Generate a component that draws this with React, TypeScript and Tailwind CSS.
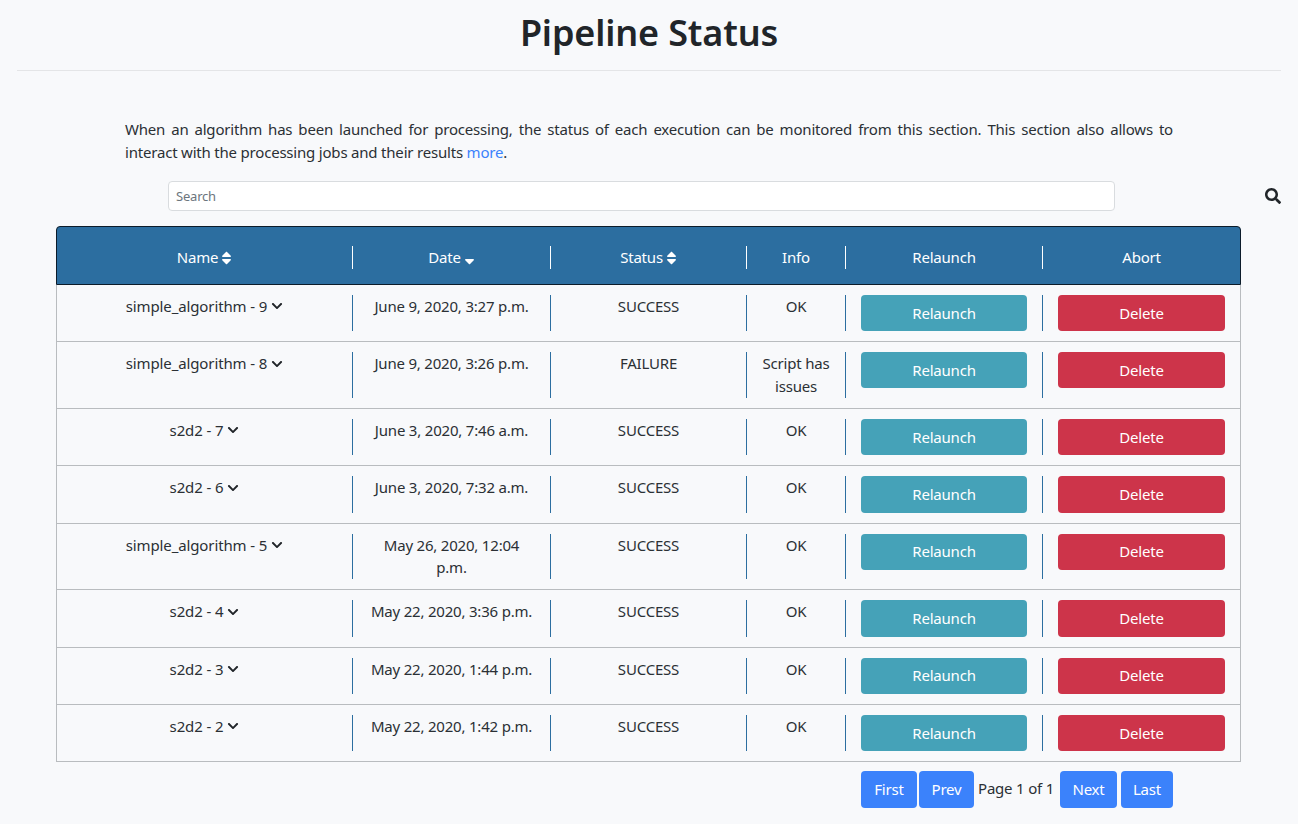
import React from 'react';
import { FaChevronDown, FaSearch, FaSort, FaSortDown } from 'react-icons/fa';

const COLS = 'grid grid-cols-[296px_198px_196px_99px_197px_197px]';

const RUNS = [
  { name: 'simple_algorithm - 9', date: 'June 9, 2020, 3:27 p.m.', status: 'SUCCESS', info: 'OK' },
  { name: 'simple_algorithm - 8', date: 'June 9, 2020, 3:26 p.m.', status: 'FAILURE', info: 'Script has issues' },
  { name: 's2d2 - 7', date: 'June 3, 2020, 7:46 a.m.', status: 'SUCCESS', info: 'OK' },
  { name: 's2d2 - 6', date: 'June 3, 2020, 7:32 a.m.', status: 'SUCCESS', info: 'OK' },
  { name: 'simple_algorithm - 5', date: 'May 26, 2020, 12:04 p.m.', status: 'SUCCESS', info: 'OK' },
  { name: 's2d2 - 4', date: 'May 22, 2020, 3:36 p.m.', status: 'SUCCESS', info: 'OK' },
  { name: 's2d2 - 3', date: 'May 22, 2020, 1:44 p.m.', status: 'SUCCESS', info: 'OK' },
  { name: 's2d2 - 2', date: 'May 22, 2020, 1:42 p.m.', status: 'SUCCESS', info: 'OK' },
];

const Cell: React.FC<{ children: React.ReactNode; last?: boolean; tight?: boolean }> = ({ children, last, tight }) => (
  <div className={`${tight ? 'px-[13px]' : 'px-[15px]'} text-center ${last ? '' : 'border-r border-[#2c6ea0]'}`}>{children}</div>
);

const HeadCell: React.FC<{ children: React.ReactNode; last?: boolean }> = ({ children, last }) => (
  <div className={`h-[23px] flex items-center justify-center gap-[3px] ${last ? '' : 'border-r border-white'}`}>{children}</div>
);

const PageButton: React.FC<{ label: string; width: string }> = ({ label, width }) => (
  <button className={`${width} h-[37px] rounded bg-[#3b82fb] text-white`}>{label}</button>
);

export default function App() {
  return (
    <div className="h-[824px] bg-[#f8f9fb] text-[15px] leading-[22.9px] tracking-[-0.2px] text-[#2b3035] font-['Noto_Sans','Open_Sans',sans-serif] overflow-hidden">
      <div className="mx-[17px] h-[71px] border-b border-[#e4e5e7] text-center">
        <h1 className="pt-[9px] text-[36px] leading-[48px] font-semibold tracking-[-0.15px] text-[#212529]">Pipeline Status</h1>
      </div>

      <p className="ml-[125px] w-[1048px] mt-[47px] text-justify">
        When an algorithm has been launched for processing, the status of each execution can be monitored from this
        section. This section also allows to interact with the processing jobs and their results{' '}
        <a className="text-[#3b82fb]">more</a>.
      </p>

      <div className="flex items-center mt-[17px]">
        <input
          placeholder="Search"
          className="ml-[168px] w-[947px] h-[30px] rounded border border-[#d9dcdf] bg-white px-[7px] text-[13px] placeholder:text-[#6c757d]"
        />
        <FaSearch className="ml-[150px] w-4 h-4 text-[#212529]" />
      </div>

      <div className="ml-[56px] w-[1185px] mt-[15px]">
        <div className={`${COLS} h-[59px] pt-[5px] items-center rounded-t border border-[#0c1c2a] bg-[#2c6ea0] text-white`}>
          <HeadCell>Name <FaSort className="w-[11px] h-4" /></HeadCell>
          <HeadCell>Date <FaSortDown className="w-[11px] h-4" /></HeadCell>
          <HeadCell>Status <FaSort className="w-[11px] h-4" /></HeadCell>
          <HeadCell>Info</HeadCell>
          <HeadCell>Relaunch</HeadCell>
          <HeadCell last>Abort</HeadCell>
        </div>

        <div className="border-x border-b border-[#b9bcbf]">
          {RUNS.map((run) => (
            <div key={run.name} className={`${COLS} py-[10px] border-b border-[#b9bcbf] last:border-b-0`}>
              <Cell>
                <span className="inline-flex items-center gap-1 tracking-[-0.12px]">
                  {run.name} <FaChevronDown className="w-3 h-3 text-[#212529]" />
                </span>
              </Cell>
              <Cell>{run.date}</Cell>
              <Cell>{run.status}</Cell>
              <Cell tight>{run.info}</Cell>
              <Cell>
                <button className="w-full h-[36.3px] rounded bg-[#45a2b8] text-white">Relaunch</button>
              </Cell>
              <Cell last>
                <button className="w-full h-[36.3px] rounded bg-[#cd344a] text-white">Delete</button>
              </Cell>
            </div>
          ))}
        </div>

        <div className="flex items-start mt-[9px] ml-[805px]">
          <PageButton label="First" width="w-[56px]" />
          <PageButton label="Prev" width="ml-[2px] w-[55px]" />
          <span className="ml-1 w-[82px] pt-[6px]">Page 1 of 1</span>
          <PageButton label="Next" width="w-[57px]" />
          <PageButton label="Last" width="ml-1 w-[52px]" />
        </div>
      </div>
    </div>
  );
}
